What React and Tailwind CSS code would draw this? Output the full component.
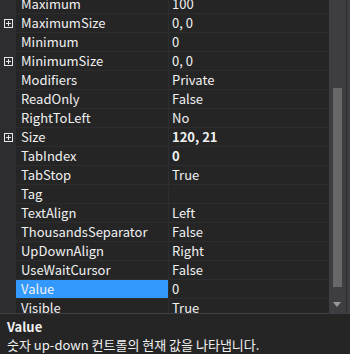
import React from 'react';

const rows = [
  { name: 'Maximum', value: '100' },
  { name: 'MaximumSize', value: '0, 0', expand: true },
  { name: 'Minimum', value: '0' },
  { name: 'MinimumSize', value: '0, 0', expand: true },
  { name: 'Modifiers', value: 'Private' },
  { name: 'ReadOnly', value: 'False' },
  { name: 'RightToLeft', value: 'No' },
  { name: 'Size', value: '120, 21', expand: true, bold: true },
  { name: 'TabIndex', value: '0', bold: true },
  { name: 'TabStop', value: 'True' },
  { name: 'Tag', value: '' },
  { name: 'TextAlign', value: 'Left' },
  { name: 'ThousandsSeparator', value: 'False' },
  { name: 'UpDownAlign', value: 'Right' },
  { name: 'UseWaitCursor', value: 'False' },
  { name: 'Value', value: '0', selected: true },
  { name: 'Visible', value: 'True' },
];

const PlusBox = () => (
  <svg width="9" height="9" viewBox="0 0 9 9" className="block">
    <rect x="0.5" y="0.5" width="8" height="8" fill="none" stroke="#e6e6e6" strokeWidth="1" />
    <path d="M2 4.5H7M4.5 2V7" stroke="#e6e6e6" strokeWidth="1" />
  </svg>
);

const Row = ({ row }) => (
  <div className="flex h-[19px] shrink-0">
    <div className="w-[16px] shrink-0 bg-[#2d2d30] flex items-center justify-center">
      {row.expand && <PlusBox />}
    </div>
    <div className="flex-1 flex border-b border-[#2d2d30]">
      <div className={`w-[152px] shrink-0 pl-[5px] flex items-center whitespace-nowrap ${row.selected ? 'bg-[#3399ff]' : ''}`}>
        {row.name}
      </div>
      <div className={`flex-1 border-l border-[#2d2d30] pl-[3px] flex items-center whitespace-nowrap ${row.bold ? 'font-bold' : ''}`}>
        {row.value}
      </div>
    </div>
  </div>
);

export default function App() {
  return (
    <div className="w-[350px] h-[354px] bg-[#252526] text-[#f1f1f1] text-[13px] flex flex-col overflow-hidden" style={{ fontFamily: '"Noto Sans CJK KR", "Noto Sans", sans-serif' }}>
      <div className="h-[313px] shrink-0 flex overflow-hidden">
        <div className="flex-1 flex flex-col mt-[-5px] overflow-hidden">
          {rows.map((r) => <Row key={r.name} row={r} />)}
        </div>
        <div className="w-[21px] shrink-0 flex">
          <div className="w-[17px] bg-[#3e3e42] flex flex-col pt-[88px] pl-[4px]">
            <div className="w-[9px] h-[199px] bg-[#686868]" />
            <div className="mt-[15px] w-0 h-0 border-l-[4.5px] border-r-[4.5px] border-t-[5px] border-l-transparent border-r-transparent border-t-[#999999]" />
          </div>
          <div className="w-[1px] bg-[#2d2d30]" />
          <div className="flex-1 bg-[#3e3e42]" />
        </div>
      </div>
      <div className="flex-1 border-t border-[#3f3f46] bg-[#252526] pl-[7px] pt-[4px] leading-[18px]">
        <div className="font-bold">Value</div>
        <div className="whitespace-nowrap">숫자 up-down 컨트롤의 현재 값을 나타냅니다.</div>
      </div>
    </div>
  );
}
